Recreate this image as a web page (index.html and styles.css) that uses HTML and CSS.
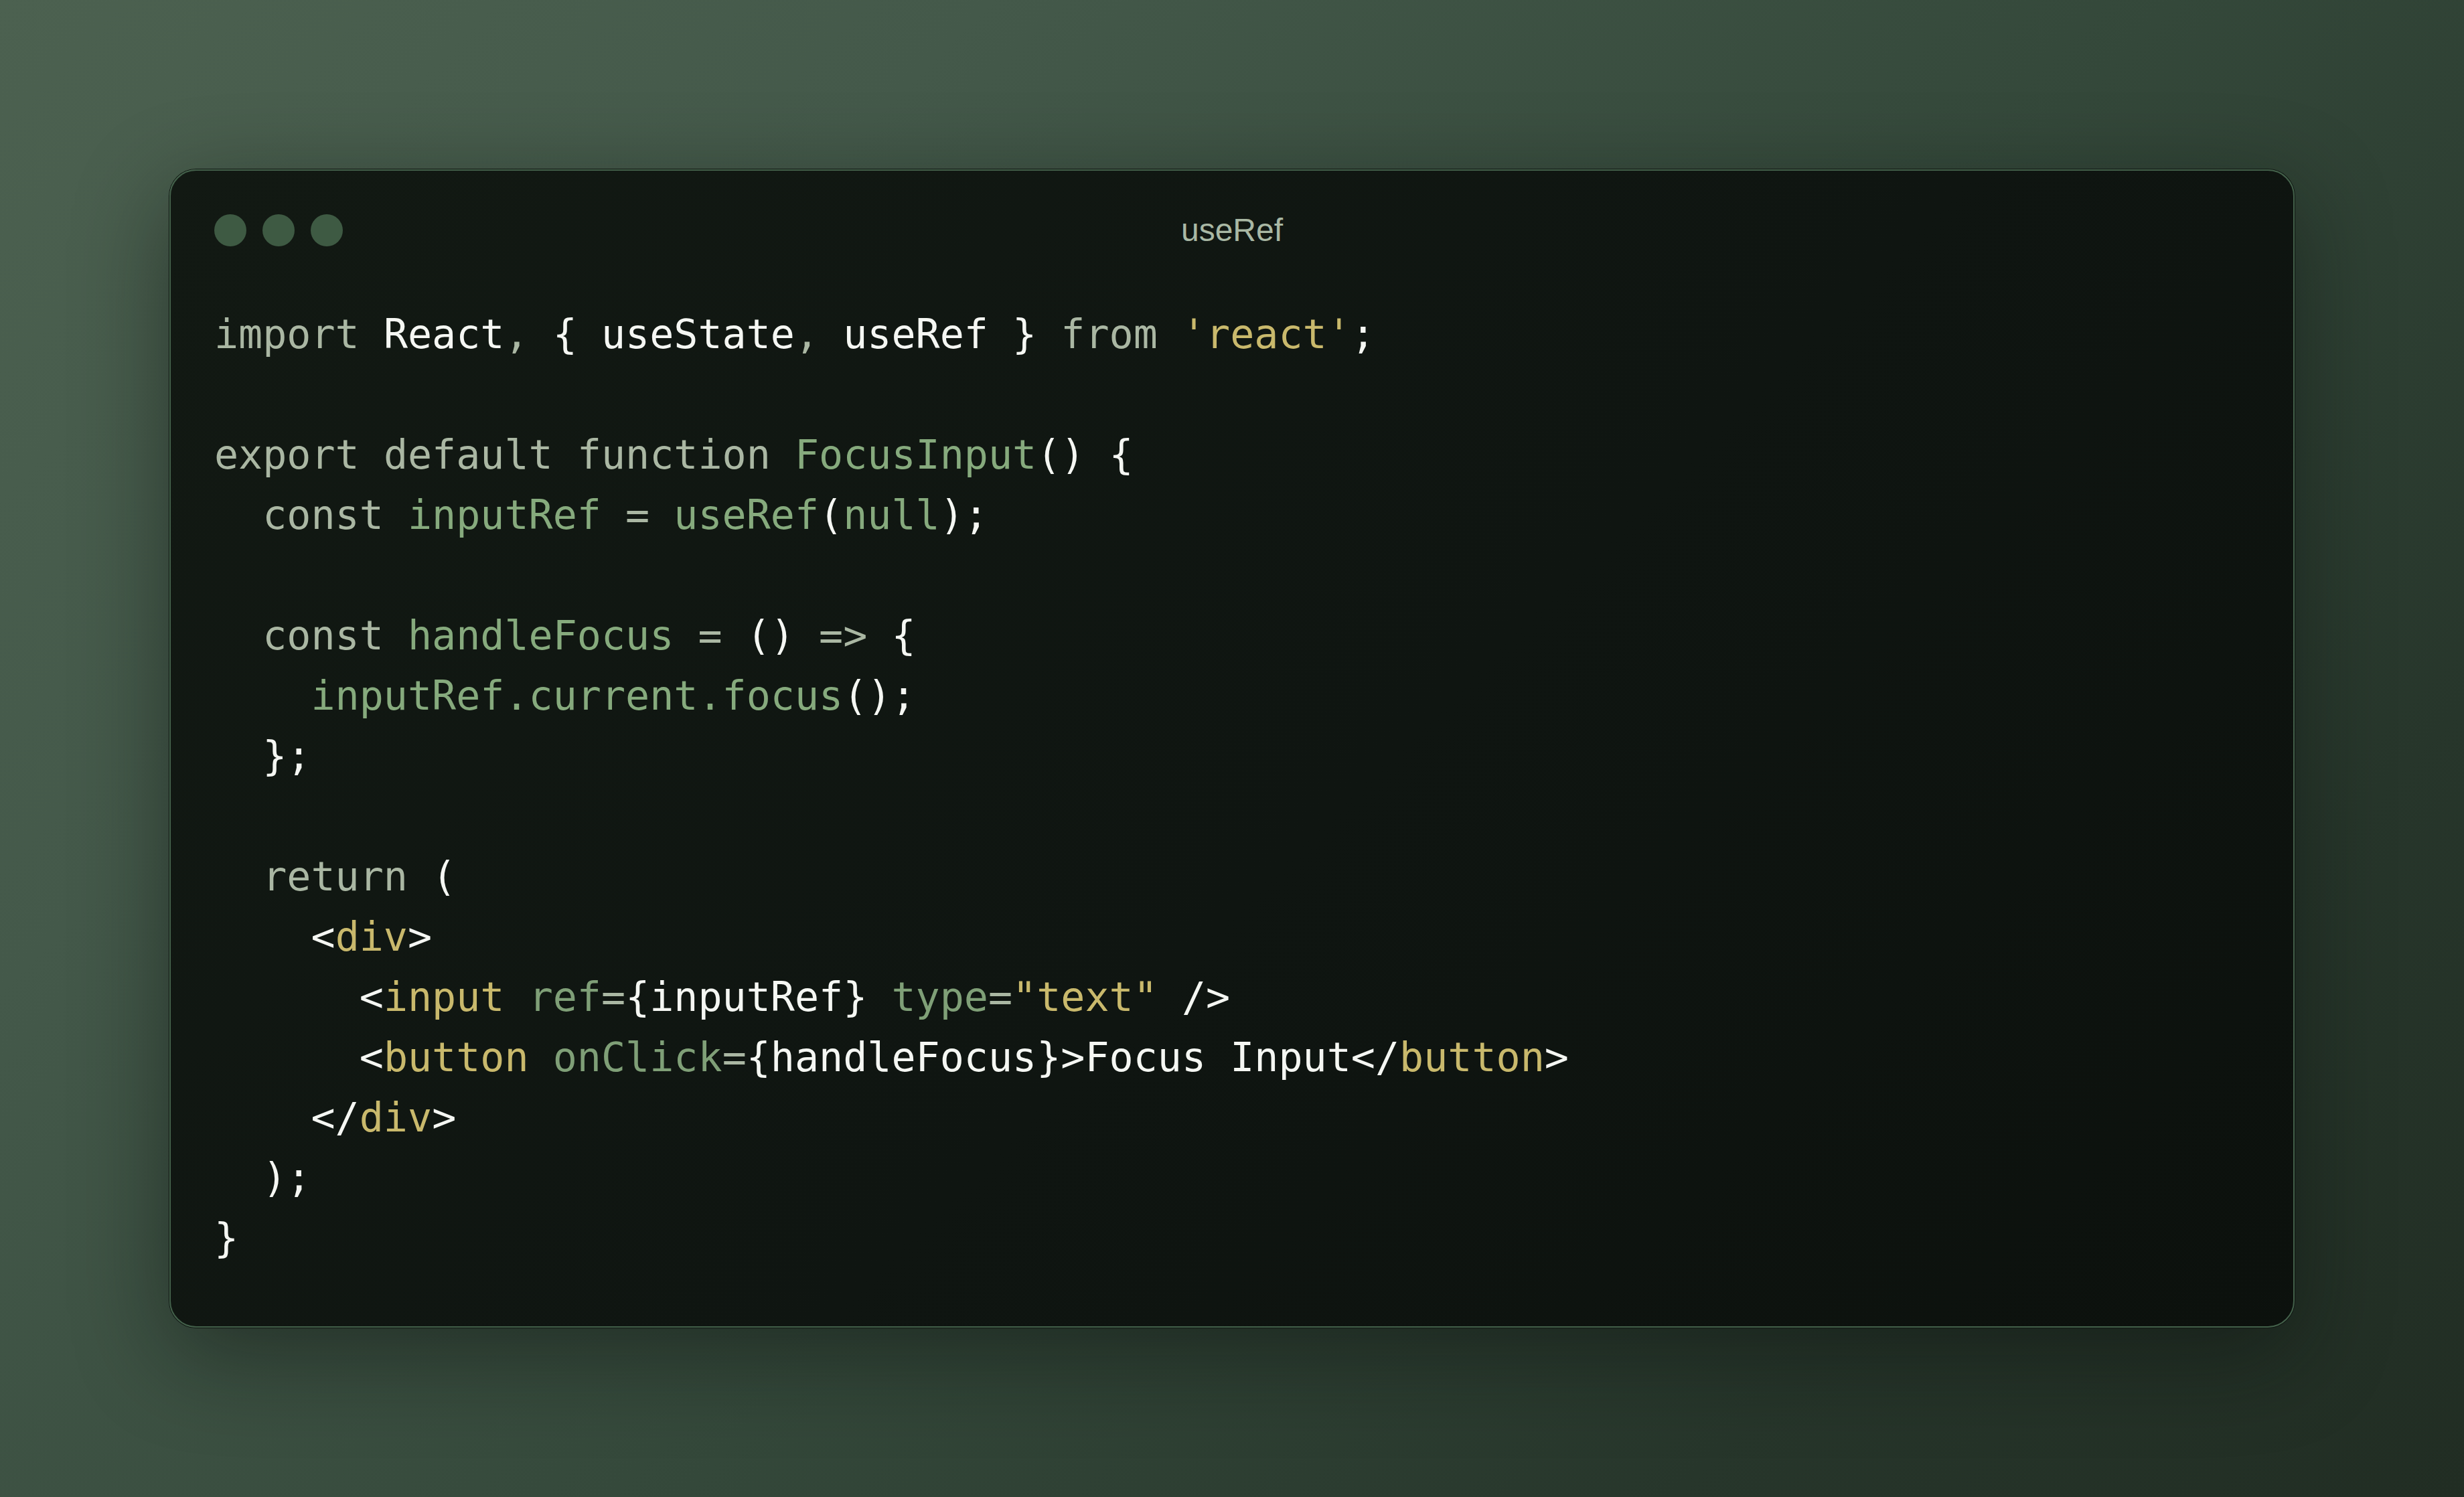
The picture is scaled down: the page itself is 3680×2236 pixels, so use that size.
FILE: index.html
```html
<!DOCTYPE html>
<html lang="en">
<head>
<meta charset="utf-8">
<title>useRef</title>
<link rel="stylesheet" href="styles.css">
</head>
<body>
<main class="stage">
  <section class="window">
    <header class="titlebar">
      <div class="dots"><span class="dot"></span><span class="dot"></span><span class="dot"></span></div>
      <div class="title">useRef</div>
      <div class="spacer"></div>
    </header>
    <pre class="code"><code><span class="k">import</span> <span class="w">React</span><span class="k">,</span> <span class="w">{</span> <span class="w">useState</span><span class="k">,</span> <span class="w">useRef</span> <span class="w">}</span> <span class="k">from</span> <span class="s">'react'</span><span class="w">;</span>

<span class="k">export</span> <span class="k">default</span> <span class="k">function</span> <span class="f">FocusInput</span><span class="w">()</span> <span class="w">{</span>
  <span class="k">const</span> <span class="f">inputRef</span> <span class="k">=</span> <span class="f">useRef</span><span class="w">(</span><span class="f">null</span><span class="w">);</span>

  <span class="k">const</span> <span class="f">handleFocus</span> <span class="k">=</span> <span class="w">()</span> <span class="k">=&gt;</span> <span class="w">{</span>
    <span class="f">inputRef.current.focus</span><span class="w">();</span>
  <span class="w">};</span>

  <span class="k">return</span> <span class="w">(</span>
    <span class="w">&lt;</span><span class="s">div</span><span class="w">&gt;</span>
      <span class="w">&lt;</span><span class="s">input</span> <span class="a">ref</span><span class="k">=</span><span class="w">{inputRef}</span> <span class="a">type</span><span class="k">=</span><span class="s">"text"</span> <span class="w">/&gt;</span>
      <span class="w">&lt;</span><span class="s">button</span> <span class="a">onClick</span><span class="k">=</span><span class="w">{handleFocus}&gt;Focus Input&lt;/</span><span class="s">button</span><span class="w">&gt;</span>
    <span class="w">&lt;/</span><span class="s">div</span><span class="w">&gt;</span>
  <span class="w">);</span>
<span class="w">}</span></code></pre>
  </section>
</main>
</body>
</html>
```
FILE: styles.css
```css
html, body {
  margin: 0;
  padding: 0;
}

body {
  width: 3680px;
  height: 2236px;
  overflow: hidden;
  background: linear-gradient(135deg, #4c6150 0%, #44594a 25%, #34483a 55%, #27362b 80%, #212d23 100%);
}

.stage {
  box-sizing: border-box;
  height: 2236px;
  padding: 253px 253px 0 253px;
}

.window {
  box-sizing: border-box;
  width: 3174px;
  height: 1730px;
  border: 2px solid #43604a;
  border-radius: 40px;
  background: linear-gradient(135deg, #121913 0%, #0f1511 55%, #0c110d 100%);
  box-shadow: 0 0 0 1px #0f1611, 0 40px 140px rgba(8, 14, 10, 0.45);
  padding: 61px 65px 0 65px;
}

.titlebar {
  display: grid;
  grid-template-columns: 1fr auto 1fr;
  align-items: center;
  height: 48px;
}

.dots {
  display: flex;
  gap: 24px;
}

.dot {
  width: 48px;
  height: 48px;
  border-radius: 50%;
  background: #3e5a43;
}

.title {
  font-family: "Liberation Sans", Arial, sans-serif;
  font-size: 48px;
  color: #a9b8a4;
}

.code {
  margin: 90px 0 0 0;
  font-family: "DejaVu Sans Mono", "Liberation Mono", monospace;
  font-size: 60px;
  line-height: 90px;
  color: #f3f5f1;
  white-space: pre;
}

.code code {
  font-family: inherit;
}

.k { color: #aab7a3; }
.w { color: #f5f7f3; }
.s { color: #c9b96c; }
.f { color: #86aa7d; }
.a { color: #7f9f77; }
```
